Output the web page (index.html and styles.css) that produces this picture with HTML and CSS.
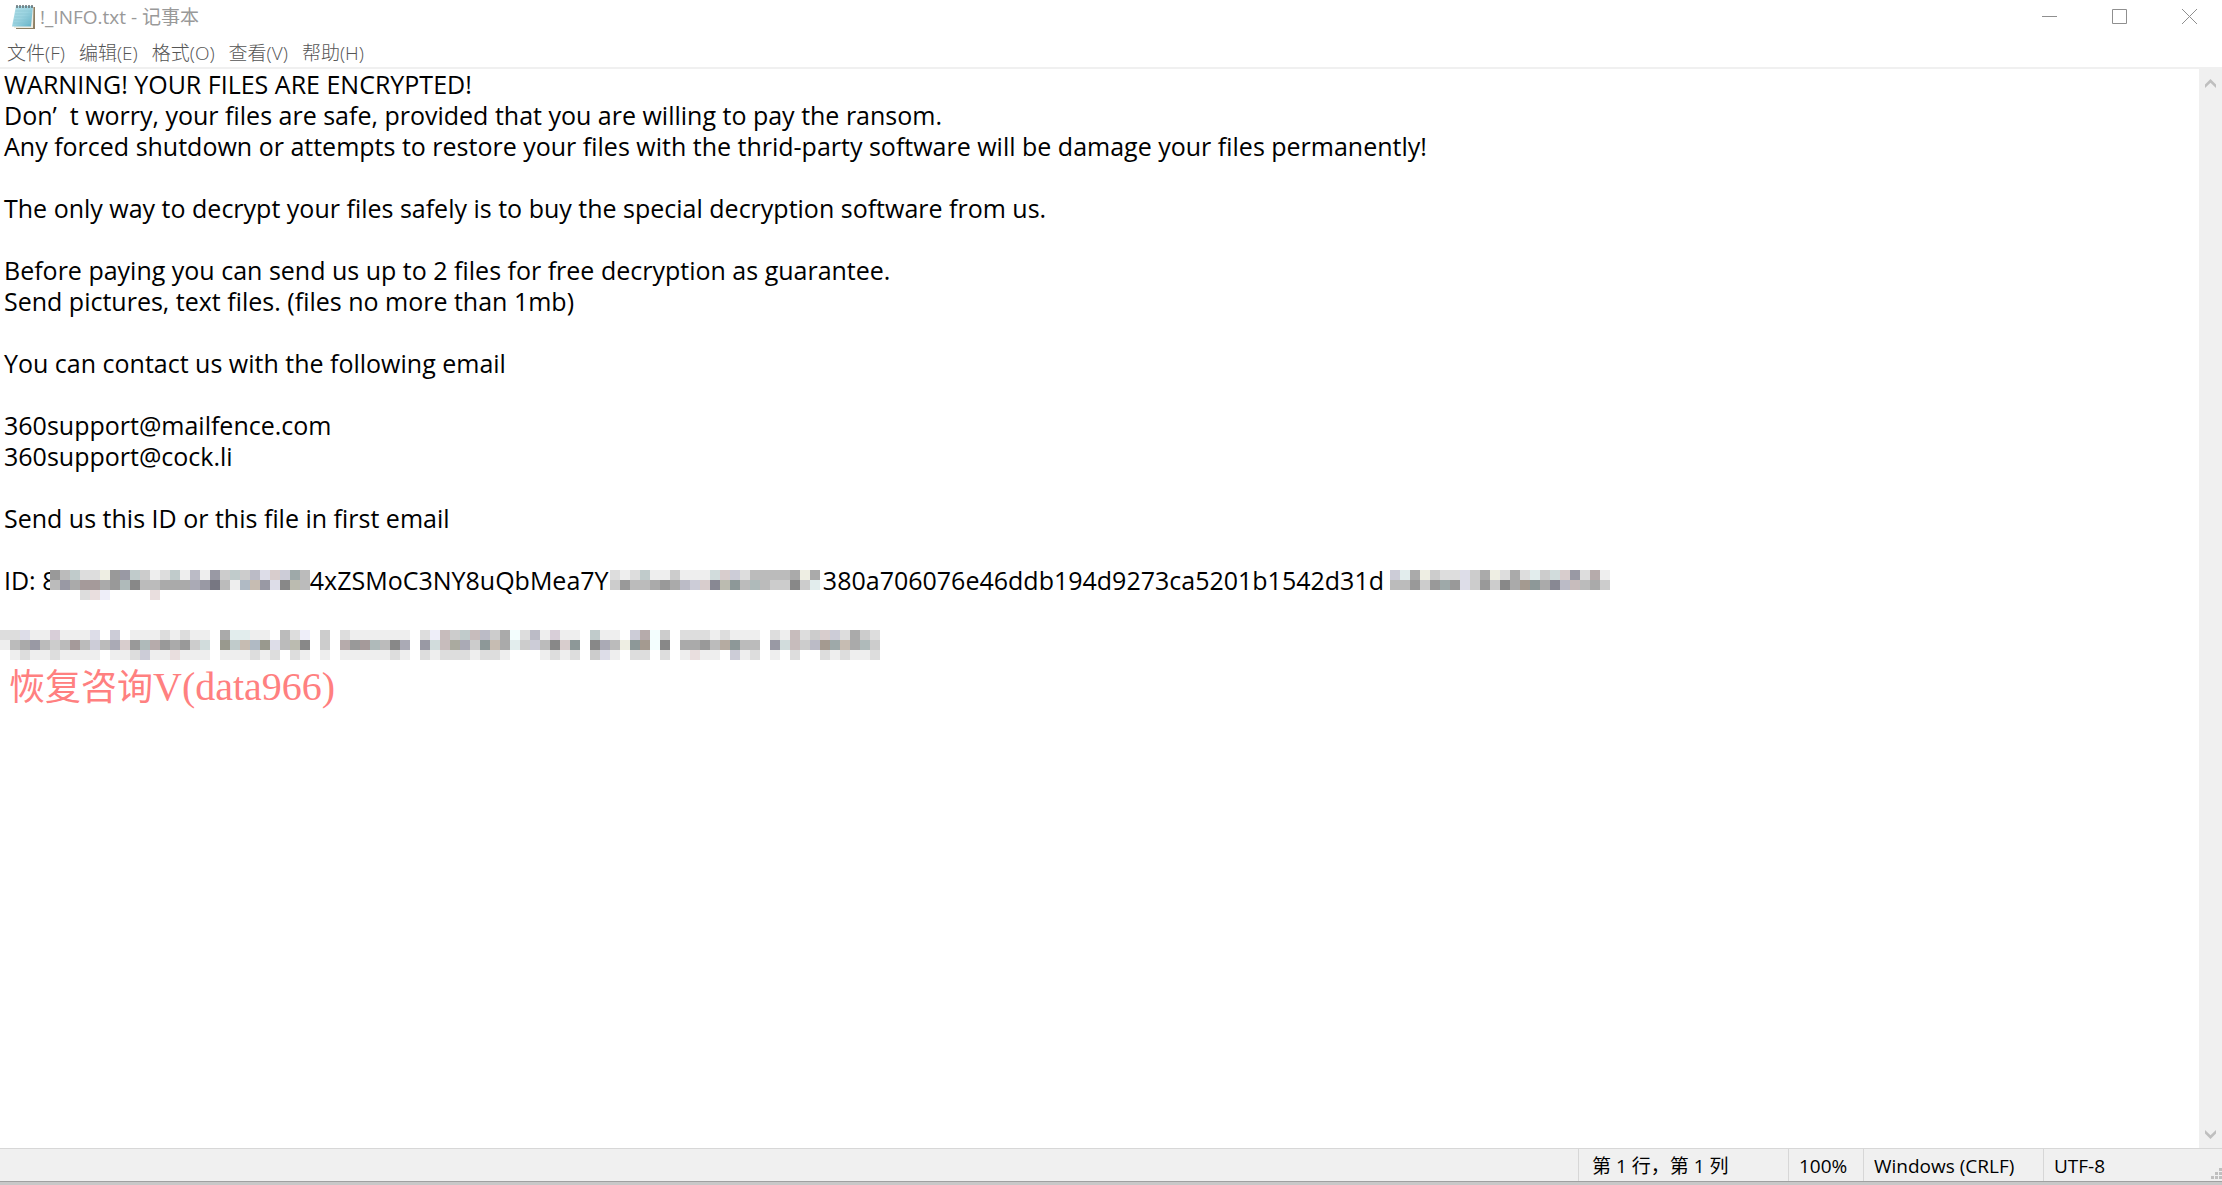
FILE: index.html
```html
<!DOCTYPE html>
<html lang="zh-CN">
<head>
    <meta charset="UTF-8">
    <meta name="viewport" content="width=device-width, initial-scale=1.0">
    <title>!_INFO.txt - 记事本</title>
    <link rel="stylesheet" href="styles.css">
</head>
<body>
    <div class="window">
        <header class="titlebar">
            <svg class="app-icon" width="26" height="26" viewBox="0 0 26 26" aria-hidden="true">
                <defs>
                    <linearGradient id="paper" x1="0" y1="0" x2="1" y2="1">
                        <stop offset="0" stop-color="#b5e2ea"/>
                        <stop offset="0.5" stop-color="#9bd3e0"/>
                        <stop offset="1" stop-color="#5fb0c6"/>
                    </linearGradient>
                </defs>
                <path d="M6 3L24 3L24 25L5 25Z" fill="#8d7f63"/>
                <path d="M5 2.500L22.500 2.500L22 24L3 24Z" fill="#efece2"/>
                <path d="M5 2L22 2L20 22.500L1 22.500Z" fill="url(#paper)"/>
                <path d="M4.500 7H20.500M4 10H20.500M3.500 13H20M3 16H19.500M2.500 19H19" stroke="#86c3d2" stroke-width="0.600"/>
                <path d="M6 1V4M9 1V4M12 1V4M15 1V4M18 1V4M21 1V4" stroke="#5b6468" stroke-width="1.400"/>
            </svg>
            <h1 class="title">!_INFO.txt - 记事本</h1>
            <div class="window-buttons">
                <button type="button" aria-label="最小化">
                    <svg width="15" height="15" viewBox="0 0 15 15"><path d="M0 7.500H15"/></svg>
                </button>
                <button type="button" aria-label="最大化">
                    <svg width="15" height="15" viewBox="0 0 15 15"><path d="M0.500 0.500H14.500V14.500H0.500Z"/></svg>
                </button>
                <button type="button" aria-label="关闭">
                    <svg width="15" height="15" viewBox="0 0 15 15"><path d="M0 0L15 15M15 0L0 15"/></svg>
                </button>
            </div>
        </header>
        <nav class="menubar">
            <button type="button">文件(F)</button>
            <button type="button">编辑(E)</button>
            <button type="button">格式(O)</button>
            <button type="button">查看(V)</button>
            <button type="button">帮助(H)</button>
        </nav>
        <main class="content">
            <div class="editor">
                <textarea class="text" aria-label="文本编辑器" spellcheck="false">
WARNING! YOUR FILES ARE ENCRYPTED!
Don’  t worry, your files are safe, provided that you are willing to pay the ransom.
Any forced shutdown or attempts to restore your files with the thrid-party software will be damage your files permanently!

The only way to decrypt your files safely is to buy the special decryption software from us.

Before paying you can send us up to 2 files for free decryption as guarantee.
Send pictures, text files. (files no more than 1mb)

You can contact us with the following email

360support@mailfence.com
360support@cock.li

Send us this ID or this file in first email

ID: 8                                       4xZSMoC3NY8uQbMea7Y                                 380a706076e46ddb194d9273ca5201b1542d31d</textarea>
                <svg class="mosaic" id="mosaic" width="1640" height="100" aria-hidden="true"></svg>
                <p class="note">恢复咨询<span>V(data966)</span></p>
            </div>
            <div class="scrollbar">
                <button type="button" aria-label="向上滚动">
                    <svg width="11" height="9" viewBox="0 0 11 9"><path d="M0 5.500L5.500 0L11 5.500V9L5.500 3.800L0 9Z"/></svg>
                </button>
                <button type="button" aria-label="向下滚动">
                    <svg width="11" height="9" viewBox="0 0 11 9"><path d="M0 3.500L5.500 9L11 3.500V0L5.500 5.200L0 0Z"/></svg>
                </button>
            </div>
        </main>
        <footer class="statusbar">
            <span class="cell position">第 1 行，第 1 列</span>
            <span class="cell zoom">100%</span>
            <span class="cell eol">Windows (CRLF)</span>
            <span class="cell encoding">UTF-8</span>
            <svg class="grip" width="12" height="12" viewBox="0 0 12 12" aria-hidden="true">
                <path d="M9 0h3v3h-3zM5 4h3v3h-3zM9 4h3v3h-3zM1 8h3v3h-3zM5 8h3v3h-3zM9 8h3v3h-3z"/>
            </svg>
        </footer>
    </div>
    <script src="mosaic.js"></script>
</body>
</html>
```
FILE: styles.css
```css
html, body {
    height: 100%;
    margin: 0;
    padding: 0;
    font-family: "Open Sans", "Noto Sans CJK SC", sans-serif;
}
button {
    margin: 0;
    padding: 0;
    border: none;
    background: none;
    font: inherit;
    color: inherit;
}
.window {
    height: 100vh;
    display: flex;
    flex-direction: column;
    box-sizing: border-box;
    background-color: #fff;
    border-bottom: 3px solid #c8c8c8;
}
.titlebar {
    display: flex;
    align-items: center;
    height: 33px;
    padding-left: 11px;
    flex-shrink: 0;
    color: #999;
}
.title {
    margin: 0 0 0 3px;
    font-size: 19px;
    line-height: 32px;
    font-weight: 400;
}
.window-buttons {
    display: flex;
    margin-left: auto;
    margin-right: -2px;
}
.window-buttons button {
    width: 70px;
    height: 33px;
    display: flex;
    align-items: center;
    justify-content: center;
}
.window-buttons path {
    fill: none;
    stroke: #8f8f8f;
}
.menubar {
    display: flex;
    gap: 14px;
    height: 30px;
    padding: 4px 0 0 7px;
    flex-shrink: 0;
    border-bottom: 2px solid #f0f0f0;
    color: #555;
    font-size: 19px;
    line-height: 32px;
    font-weight: 300;
}
.content {
    display: flex;
    flex: 1;
    min-height: 0;
}
.editor {
    position: relative;
    flex: 1;
    min-width: 0;
}
.text {
    display: block;
    width: 100%;
    height: 100%;
    box-sizing: border-box;
    margin: 0;
    padding: 0 4px;
    border: none;
    outline: none;
    resize: none;
    overflow: hidden;
    color: #000;
    background-color: #fff;
    font-family: "Open Sans", "Noto Sans CJK SC", sans-serif;
    font-size: 25px;
    line-height: 31px;
}
/* pixelated strips over the hidden parts of the ID */
.mosaic {
    position: absolute;
    left: 0;
    top: 501px;
    filter: saturate(0.6);
}
.note {
    position: absolute;
    left: 9px;
    top: 594px;
    margin: 0;
    color: #ff8080;
    font-family: "Liberation Serif", "Noto Sans CJK SC", serif;
    font-size: 36px;
    line-height: 48px;
}
.note span {
    font-size: 40px;
}
.scrollbar {
    width: 23px;
    display: flex;
    flex-direction: column;
    justify-content: space-between;
    background-color: #f0f0f0;
}
.scrollbar button {
    height: 28px;
    display: flex;
    align-items: center;
    justify-content: center;
}
.scrollbar path, .grip path {
    fill: #bfbfbf;
}
.statusbar {
    position: relative;
    display: flex;
    justify-content: flex-end;
    height: 32px;
    flex-shrink: 0;
    border-top: 1px solid #d7d7d7;
    border-bottom: 1px solid #a0a0a0;
    background-color: #f0f0f0;
    font-size: 19px;
    line-height: 34px;
}
.cell {
    box-sizing: border-box;
    padding-left: 10px;
    border-left: 1px solid #d7d7d7;
    white-space: nowrap;
}
.position {
    width: 210px;
    padding-left: 13px;
}
.zoom {
    width: 75px;
}
.eol {
    width: 180px;
}
.encoding {
    width: 179px;
}
.grip {
    position: absolute;
    right: 0;
    bottom: 1px;
}
```
FILE: mosaic.js
```js
// Each strip: start x, start y, then rows of 10px cells ("-" is an empty cell)
const strips = [
    [50, 0, [
        "999 bbb bcc ddd ddd eed 999 99a bcc ccc eee ddd bcc eee bbc eee 99a ccc bcc ccc bbc dde dcc ccd 9aa bbb",
        "bbb 99a aaa a99 a99 aaa 999 abb 888 bbb bbb aaa aaa aaa aab 99a 778 bbb eee abc cba 99a dde 888 bba bbb",
        "- - - ddd edd eef - - - - edd fff"
    ]],
    [610, 0, [
        "ddd eee ddd bcc eee eee ccc eee eee eee cdd dcc ccd ddd bbb bbb bbb bbb aaa eed aaa",
        "ccc 999 bbb bbb aaa 999 aaa bbc ccd dcc 889 bba 899 bbb abb bbb ccc ccc 888 ccc dee"
    ]],
    [1390, 0, [
        "ccd dee aaa eed ccc ddd ddd dde ccc aaa eed ddd aaa ddd dee ccc cdd dcc 99a ddd baa eee",
        "bbb bbb 999 ccc 999 9aa 999 dde ccc 999 ccc 888 aaa a98 899 aaa 889 bbc cbb bbb aaa ccc"
    ]],
    [0, 60, [
        "ddd ddd dde eee eee dcd eee eee eee dde fff ccd fff eee eee eee ddd eee ddd eee eee",
        "eee bbb aaa 99a bbb ccc bbb a99 bbb ccd bbb aab dcc 999 abb baa 999 aaa 999 ccc cdd",
        "- eee ddd eee eee ddd eee eee eee eee - eee eee ddd ccd eee eee edd eee eee eee"
    ]],
    [220, 60, [
        "aaa dee dee eee eee fff bbb ddd eef fff ccc - ddd eee eee eee eee eee eee",
        "998 bcc cba abc 998 dde bbb bba 888 - ccc - baa 999 a99 abb bbb 888 aab",
        "eee eee eee ddd eee ddd - ddd eee - eee - eee eee eee eee eee ddd eee"
    ]],
    [420, 60, [
        "ddd eef cbb ccc bcc cbb bbc ccc aaa eff ddd bbc eee dcd eee eee",
        "99a cdd cbb aa9 aab ccc 899 cba aaa dee ccc ccd bbb 888 dcc 899",
        "ddd eee ddd ddd ddd eee ddd ddd eee fff fff fff eee ddd eee ddd"
    ]],
    [590, 60, [
        "bcc eee eee fff ccd baa eff ccc",
        "888 aab bbb eed 899 a98 eff 888",
        "ccc dde eee fff ddd ddd - ddd"
    ]],
    [680, 60, [
        "ddd ddd ddd eee ddd eee eee eee",
        "aaa aaa 999 bbb ba9 899 bbb bbb",
        "eee edd eee eee fff ccd eee ddd"
    ]],
    [770, 60, [
        "ddd eee cbb ddd ccc dcc ccd ddd aaa ccc ddd",
        "99a cdd cbb ccc bbc a98 9aa cba aaa abb ccc",
        "eee fff ddd fff fff ddd eee ddd eee eee ddd"
    ]]
];

const mosaic = document.getElementById("mosaic");

for (const [x, y, rows] of strips) {
    rows.forEach((row, r) => {
        row.split(" ").forEach((color, c) => {
            if (color === "-") return;
            const rect = document.createElementNS("http://www.w3.org/2000/svg", "rect");
            rect.setAttribute("x", x + c * 10);
            rect.setAttribute("y", y + r * 10);
            rect.setAttribute("width", 10);
            rect.setAttribute("height", 10);
            rect.setAttribute("fill", "#" + color);
            mosaic.appendChild(rect);
        });
    });
}
```
